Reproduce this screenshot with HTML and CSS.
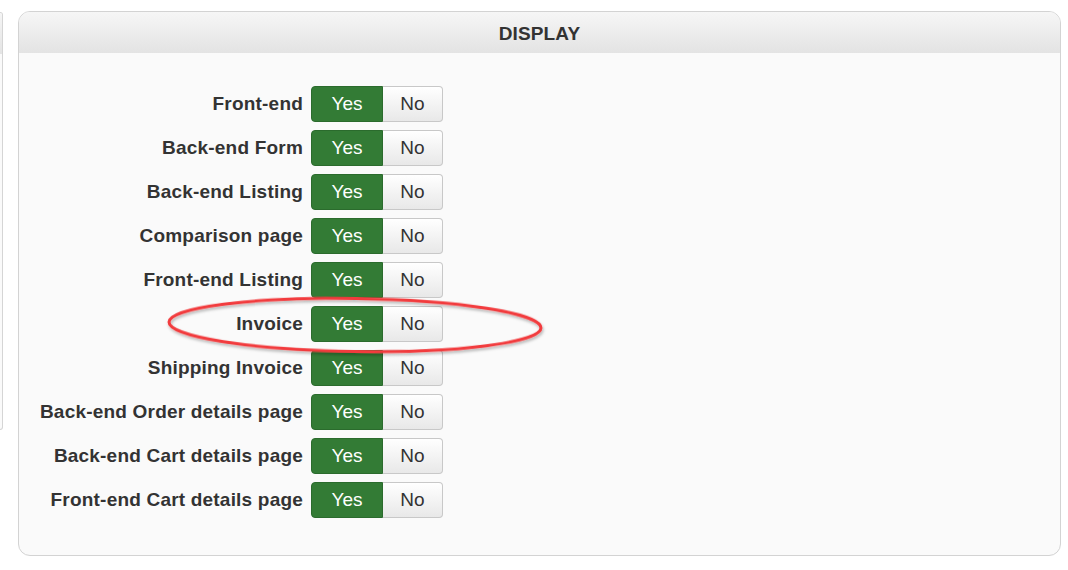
FILE: index.html
```html
<!DOCTYPE html>
<html>
<head>
<meta charset="utf-8">
<link rel="stylesheet" href="styles.css">
</head>
<body>
<div class="page">
  <div class="stub">
    <div class="stub-head"></div>
  </div>
  <div class="panel">
    <div class="panel-head">DISPLAY</div>
    <div class="panel-body">
      <div class="row"><div class="label">Front-end</div><div class="toggle"><span class="yes">Yes</span><span class="no">No</span></div></div>
      <div class="row"><div class="label">Back-end Form</div><div class="toggle"><span class="yes">Yes</span><span class="no">No</span></div></div>
      <div class="row"><div class="label">Back-end Listing</div><div class="toggle"><span class="yes">Yes</span><span class="no">No</span></div></div>
      <div class="row"><div class="label">Comparison page</div><div class="toggle"><span class="yes">Yes</span><span class="no">No</span></div></div>
      <div class="row"><div class="label">Front-end Listing</div><div class="toggle"><span class="yes">Yes</span><span class="no">No</span></div></div>
      <div class="row"><div class="label">Invoice</div><div class="toggle"><span class="yes">Yes</span><span class="no">No</span></div></div>
      <div class="row"><div class="label">Shipping Invoice</div><div class="toggle"><span class="yes">Yes</span><span class="no">No</span></div></div>
      <div class="row"><div class="label">Back-end Order details page</div><div class="toggle"><span class="yes">Yes</span><span class="no">No</span></div></div>
      <div class="row"><div class="label">Back-end Cart details page</div><div class="toggle"><span class="yes">Yes</span><span class="no">No</span></div></div>
      <div class="row"><div class="label">Front-end Cart details page</div><div class="toggle"><span class="yes">Yes</span><span class="no">No</span></div></div>
    </div>
  </div>
  <svg class="mark" width="420" height="80" viewBox="0 0 420 80">
    <defs>
      <filter id="sh" x="-10%" y="-30%" width="120%" height="160%">
        <feDropShadow dx="1" dy="2" stdDeviation="1.5" flood-color="#000" flood-opacity="0.3"/>
      </filter>
    </defs>
    <ellipse cx="205" cy="39" rx="186" ry="26.5" fill="none" stroke="#f23a3c" stroke-width="3" transform="rotate(0.9 205 39)" filter="url(#sh)"/>
  </svg>
</div>
</body>
</html>
```
FILE: styles.css
```css
* { box-sizing: border-box; }
html, body { margin: 0; padding: 0; background: #fff; }
body {
  font-family: "Liberation Sans", Arial, Helvetica, sans-serif;
  color: #333;
}
.page {
  position: relative;
  display: flex;
  align-items: flex-start;
  gap: 15px;
  width: 1068px;
  height: 570px;
}
.stub {
  margin-top: 12px;
  width: 3px;
  height: 418px;
  background: #fafafa;
  border: 1px solid #d5d5d5;
  border-left: none;
  border-radius: 0 8px 8px 0;
  overflow: hidden;
}
.stub-head {
  height: 41px;
  background: linear-gradient(#f5f5f5, #e4e4e4);
}
.panel {
  margin-top: 11px;
  width: 1043px;
  height: 545px;
  background: #fafafa;
  border: 1px solid #d3d3d3;
  border-radius: 12px;
  overflow: hidden;
}
.panel-head {
  height: 41px;
  display: flex;
  align-items: center;
  justify-content: center;
  background: linear-gradient(#f6f6f6, #e3e3e3);
  font-weight: bold;
  font-size: 19px;
  color: #333;
  padding-top: 2px;
  letter-spacing: 0.15px;
}
.panel-body {
  padding-top: 33px;
  display: flex;
  flex-direction: column;
  gap: 8px;
}
.row {
  display: flex;
  align-items: center;
  gap: 8px;
  height: 36px;
}
.label {
  width: 284px;
  text-align: right;
  font-weight: bold;
  font-size: 19px;
  color: #333;
  letter-spacing: 0.2px;
}
.toggle {
  display: flex;
  height: 36px;
}
.toggle span {
  display: flex;
  align-items: center;
  justify-content: center;
  font-size: 19px;
  height: 36px;
}
.yes {
  width: 72px;
  background: #337b35;
  color: #fff;
  border: 1px solid #2b6b2d;
  border-radius: 4px 0 0 4px;
}
.no {
  width: 60px;
  background: linear-gradient(#ffffff, #e8e8e8);
  color: #333;
  border: 1px solid #c8c8c8;
  border-left: none;
  border-radius: 0 4px 4px 0;
}
.mark {
  position: absolute;
  left: 150px;
  top: 286px;
  pointer-events: none;
}
```
